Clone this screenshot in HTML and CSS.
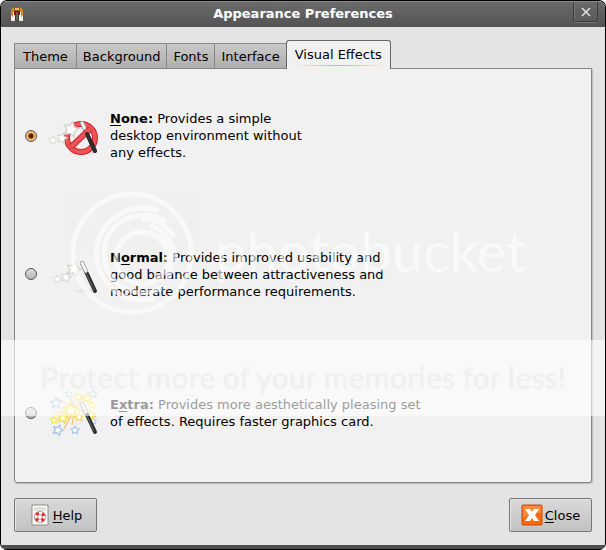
FILE: index.html
```html
<!DOCTYPE html>
<html lang="en">
<head>
  <meta charset="UTF-8" />
  <title>Appearance Preferences</title>
  <link rel="stylesheet" href="styles.css">
</head>
<body>

  <svg class="defs" aria-hidden="true">
    <defs>
      <path id="star" d="M0-5 1.6-1.9 5-1.5 2.6 1 3.2 4.5 0 2.9-3.2 4.5-2.6 1-5-1.5-1.6-1.9Z" />
      <g id="wand">
        <path d="M33 11 46 39" stroke="#2b2d2b" stroke-width="4" stroke-linecap="round" />
        <path d="M37 21 45 38" stroke="#6b6e6a" stroke-width="1" stroke-linecap="round" />
        <path d="M33 11 37 19" stroke="#bbb" stroke-width="4" stroke-linecap="round" />
        <path d="M33 11 37 19" stroke="#fafafa" stroke-width="2" stroke-linecap="round" />
      </g>
    </defs>
  </svg>

  <div class="window">
    <header class="titlebar">
      <svg class="app-icon" viewBox="0 0 14 16" aria-hidden="true">
        <path d="M1 6 3 2H11L13 6V15H1Z" fill="#f3ede6" />
        <path d="M1 9V4L4 1H10L13 4V9L11 11V6H3V11Z" fill="#d38a2a" />
        <path d="M4 1H10V5H4Z" fill="#9a6210" />
        <path d="M5 2H9V4H5Z" fill="#f0c060" />
        <path d="M4 5H10V9H4Z" fill="#a40000" />
        <path d="M5 8H9V15H5Z" fill="#3c4040" />
        <path d="M7 6V14" stroke="#888a85" />
      </svg>
      <h1>Appearance Preferences</h1>
      <button class="window-close" aria-label="Close window">
        <svg viewBox="0 0 10 10" aria-hidden="true">
          <path d="M1 1 9 9M9 1 1 9" stroke="#e4e4e0" stroke-width="1.5" />
        </svg>
      </button>
    </header>

    <main class="content">
      <div class="tabs" role="tablist">
        <button class="tab" role="tab">Theme</button>
        <button class="tab" role="tab">Background</button>
        <button class="tab" role="tab">Fonts</button>
        <button class="tab" role="tab">Interface</button>
        <button class="tab active" role="tab" aria-selected="true">Visual Effects</button>
      </div>

      <form class="panel" role="tabpanel">
        <label class="option">
          <input type="radio" name="effects" value="none" checked />
          <svg class="option-icon" viewBox="0 0 52 48" fill="none" aria-hidden="true">
            <ellipse cx="34" cy="40" rx="13" ry="3" fill="#ddd" />
            <circle cx="32" cy="26" r="14" stroke="#c4262b" stroke-width="6" />
            <circle cx="32" cy="26" r="14" stroke="#ef5257" stroke-width="4" />
            <use href="#wand" />
            <path d="M22 35 41 17" stroke="#c4262b" stroke-width="6" />
            <path d="M22 35 41 17" stroke="#ef5257" stroke-width="4" />
            <path d="M38 22 46 39" stroke="#2b2d2b" stroke-width="4" stroke-linecap="round" />
            <g fill="#fff" stroke="#d3d4cf" stroke-width="1">
              <use href="#star" transform="translate(4 28) scale(.8)" />
              <use href="#star" transform="translate(13 26) rotate(15)" />
              <use href="#star" transform="translate(22 17) rotate(15) scale(1.5)" />
            </g>
          </svg>
          <span class="option-text"><b><u>N</u>one:</b> Provides a simple<br>desktop environment without<br>any effects.</span>
        </label>

        <label class="option">
          <input type="radio" name="effects" value="normal" />
          <svg class="option-icon" viewBox="0 0 52 48" fill="none" aria-hidden="true">
            <ellipse cx="37" cy="41" rx="11" ry="2" fill="#e6e6e6" />
            <use href="#wand" y="2" />
            <g fill="#fff" stroke="#d3d4cf" stroke-width="1">
              <use href="#star" transform="translate(8 29) scale(.8)" />
              <use href="#star" transform="translate(17 27) rotate(15)" />
              <use href="#star" transform="translate(25 19) rotate(15) scale(1.4)" />
            </g>
          </svg>
          <span class="option-text"><b>N<u>o</u>rmal:</b> Provides improved usability and<br>good balance between attractiveness and<br>moderate performance requirements.</span>
        </label>

        <label class="option">
          <input type="radio" name="effects" value="extra" />
          <svg class="option-icon" viewBox="0 0 52 48" fill="none" aria-hidden="true">
            <path d="M26 19 7 9M26 19 19 4M26 19 38 4M26 19 5 25M26 19 15 40M26 19 23 36M26 19 47 28" stroke="#f6bd85" stroke-width="1.2" />
            <g fill="#fff" stroke="#a9c4e8" stroke-width="1.4">
              <use href="#star" transform="translate(7 14)" />
              <use href="#star" transform="translate(20 5) scale(.7)" />
              <use href="#star" transform="translate(44 5) scale(.8)" />
              <use href="#star" transform="translate(9 41) rotate(20)" />
              <use href="#star" transform="translate(26 41) scale(.8)" />
              <use href="#star" transform="translate(44 32) scale(.7)" />
            </g>
            <g fill="#fffef0" stroke="#f7e24a" stroke-width="1.5">
              <use href="#star" transform="translate(29 8) scale(.8)" />
              <use href="#star" transform="translate(38 9) scale(.9)" />
              <use href="#star" transform="translate(43 16) scale(.7)" />
              <use href="#star" transform="translate(22 21) scale(1.4)" />
              <use href="#star" transform="translate(5 31) scale(.7)" />
              <use href="#star" transform="translate(14 29) rotate(15)" />
              <use href="#star" transform="translate(30 28) scale(.8)" />
              <use href="#star" transform="translate(41 26) scale(.9)" />
            </g>
            <use href="#wand" y="4" />
          </svg>
          <span class="option-text"><b>E<u>x</u>tra:</b> Provides more aesthetically pleasing set<br>of effects. Requires faster graphics card.</span>
        </label>
      </form>

      <div class="actions">
        <button class="action">
          <svg viewBox="0 0 22 22" fill="none" aria-hidden="true">
            <path d="M3 1H19V21H3Z" fill="#fafaf8" stroke="#8b8d88" />
            <path d="M5 4H17M5 6H17" stroke="#c6c9c0" />
            <circle cx="11" cy="13" r="4" stroke="#777" stroke-width="4" />
            <circle cx="11" cy="13" r="4" stroke="#fff" stroke-width="3" />
            <circle cx="11" cy="13" r="4" stroke="#dc3030" stroke-width="3" stroke-dasharray="3.1 3.18" stroke-dashoffset="-1.6" />
          </svg>
          <span><u>H</u>elp</span>
        </button>
        <button class="action">
          <svg viewBox="0 0 22 22" fill="none" aria-hidden="true">
            <rect x="1" y="1" width="20" height="20" rx="1" fill="#f9690e" stroke="#c84c00" />
            <path d="M2 2H20V9Q11 9 2 14Z" fill="#ff8a3c" />
            <path d="M4 5H9L11 8 13 5H18L14 11 18 17H13L11 14 9 17H4L8 11Z" fill="#fff" />
          </svg>
          <span><u>C</u>lose</span>
        </button>
      </div>
    </main>

    <!-- watermark over the whole window -->
    <div class="watermark">
      <svg class="watermark-rings" viewBox="0 0 124 124" fill="none" stroke="#fff" stroke-width="5" stroke-linecap="round" aria-hidden="true">
        <circle cx="62" cy="62" r="59" />
        <path d="M86 19A46 46 0 1 0 82 108" />
        <path d="M94 30A39 39 0 1 0 90 98" />
        <circle cx="72" cy="67" r="26" />
        <path d="M74 28Q92 28 103 44" />
        <path d="M82 35Q104 46 106 70" />
        <path d="M92 46Q106 64 99 86" />
      </svg>
      <span class="watermark-name">photobucket</span>
      <p class="watermark-band">Protect more of your memories for less!</p>
    </div>
  </div>

</body>
</html>
```
FILE: styles.css
```css
* {
  box-sizing: border-box;
}
body {
  margin: 0;
  background-color: #fff;
  color: #000;
  font: 13px/17px "DejaVu Sans", sans-serif;
}
button {
  font: inherit;
  color: inherit;
}
u {
  text-underline-offset: 2px;
}
.defs {
  position: absolute;
  width: 0;
  height: 0;
}
.window {
  position: relative;
  display: flex;
  flex-direction: column;
  min-height: 100vh;
  border: 1px solid #000;
  border-bottom: 0;
  border-radius: 7px;
  background-color: #e4e4e4;
  overflow: hidden;
}
.window::after {
  content: "";
  height: 4px;
  background-color: #505050;
  border-bottom: 1px solid #000;
}

/* title bar */
.titlebar {
  display: grid;
  grid-template-columns: 32px 1fr 32px;
  height: 26px;
  background: linear-gradient(#6a6a6a, #545454);
  border-top: 1px solid #8a8a8a;
}
.app-icon {
  width: 14px;
  height: 16px;
  margin: 4px 0 0 9px;
}
h1 {
  margin: 0;
  color: #fff;
  font-size: 13px;
  line-height: 24px;
  text-align: center;
}
.window-close {
  width: 25px;
  height: 20px;
  padding: 0;
  border: 1px solid #3c3c3c;
  border-top: 0;
  border-radius: 0 0 3px 3px;
  background: none;
  box-shadow: 0 1px #777, inset 1px 0 #777;
}
.window-close svg {
  display: block;
  width: 10px;
  height: 10px;
  margin: 0 auto;
}

/* tabs */
.content {
  flex: 1;
  display: flex;
  flex-direction: column;
  padding: 13px;
}
.tabs {
  display: flex;
  align-items: flex-end;
  height: 29px;
  margin-bottom: -1px;
}
.tab {
  height: 26px;
  padding: 0 6px;
  border: 1px solid #888;
  border-left-width: 0;
  background: linear-gradient(#c9c9c9, #aeaeae);
}
.tab:first-child {
  padding: 0 8px;
  border-left-width: 1px;
}
.tab.active {
  position: relative;
  height: 29px;
  padding: 0 8px 2px;
  border: 1px solid #666;
  border-bottom: 0;
  border-radius: 3px 3px 0 0;
  margin-left: -1px;
  background: #f1f1f1;
}
.tab.active::after {
  content: "";
  position: absolute;
  left: 4px;
  right: 4px;
  bottom: 3px;
  height: 1px;
  background: linear-gradient(90deg, #f2f2f2, #f0a08c, #f2f2f2);
}

/* options */
.panel {
  flex: 1;
  display: grid;
  grid-template-rows: repeat(3, 1fr);
  row-gap: 5px;
  padding: 0 10px 2px;
  border: 1px solid #858585;
  border-radius: 0 0 3px 3px;
  background-color: #f1f1f1;
  box-shadow: 1px 1px 1px #bbb;
}
.option {
  display: flex;
  align-items: center;
}
.option input {
  appearance: none;
  flex: none;
  width: 12px;
  height: 12px;
  margin: 0;
  border: 1px solid #555;
  border-radius: 50%;
  background: linear-gradient(#ddd, #b5b5b5);
}
.option input:checked {
  background: radial-gradient(circle, #4a2410 2px, #f0a050 3px, #f5c48c 5px);
}
.option-icon {
  flex: none;
  width: 52px;
  height: 48px;
  margin: 0 9px 0 12px;
}

/* buttons */
.actions {
  display: flex;
  justify-content: space-between;
  padding-top: 15px;
}
.action {
  display: flex;
  align-items: center;
  justify-content: center;
  gap: 2px;
  width: 83px;
  height: 34px;
  padding: 0;
  border: 1px solid #777;
  border-radius: 2px;
  background: linear-gradient(#d9d9d9, #c2c2c2);
  box-shadow: inset 1px 1px #e6e6e6;
}
.action svg {
  width: 22px;
  height: 22px;
}

/* watermark */
.watermark {
  position: absolute;
  inset: 0;
  font-family: Lato, sans-serif;
  pointer-events: none;
}
.watermark-rings {
  position: absolute;
  left: 69px;
  top: 190px;
  width: 124px;
  height: 124px;
  opacity: .6;
}
.watermark-name {
  position: absolute;
  left: 214px;
  top: 218px;
  color: rgba(255, 255, 255, .6);
  font-size: 56px;
  line-height: 64px;
}
.watermark-band {
  position: absolute;
  left: 0;
  right: 0;
  top: 339px;
  height: 76px;
  margin: 0;
  background-color: rgba(255, 255, 255, .6);
  color: rgba(225, 225, 225, .35);
  font-size: 30px;
  font-weight: bold;
  line-height: 74px;
  text-align: center;
}
```
